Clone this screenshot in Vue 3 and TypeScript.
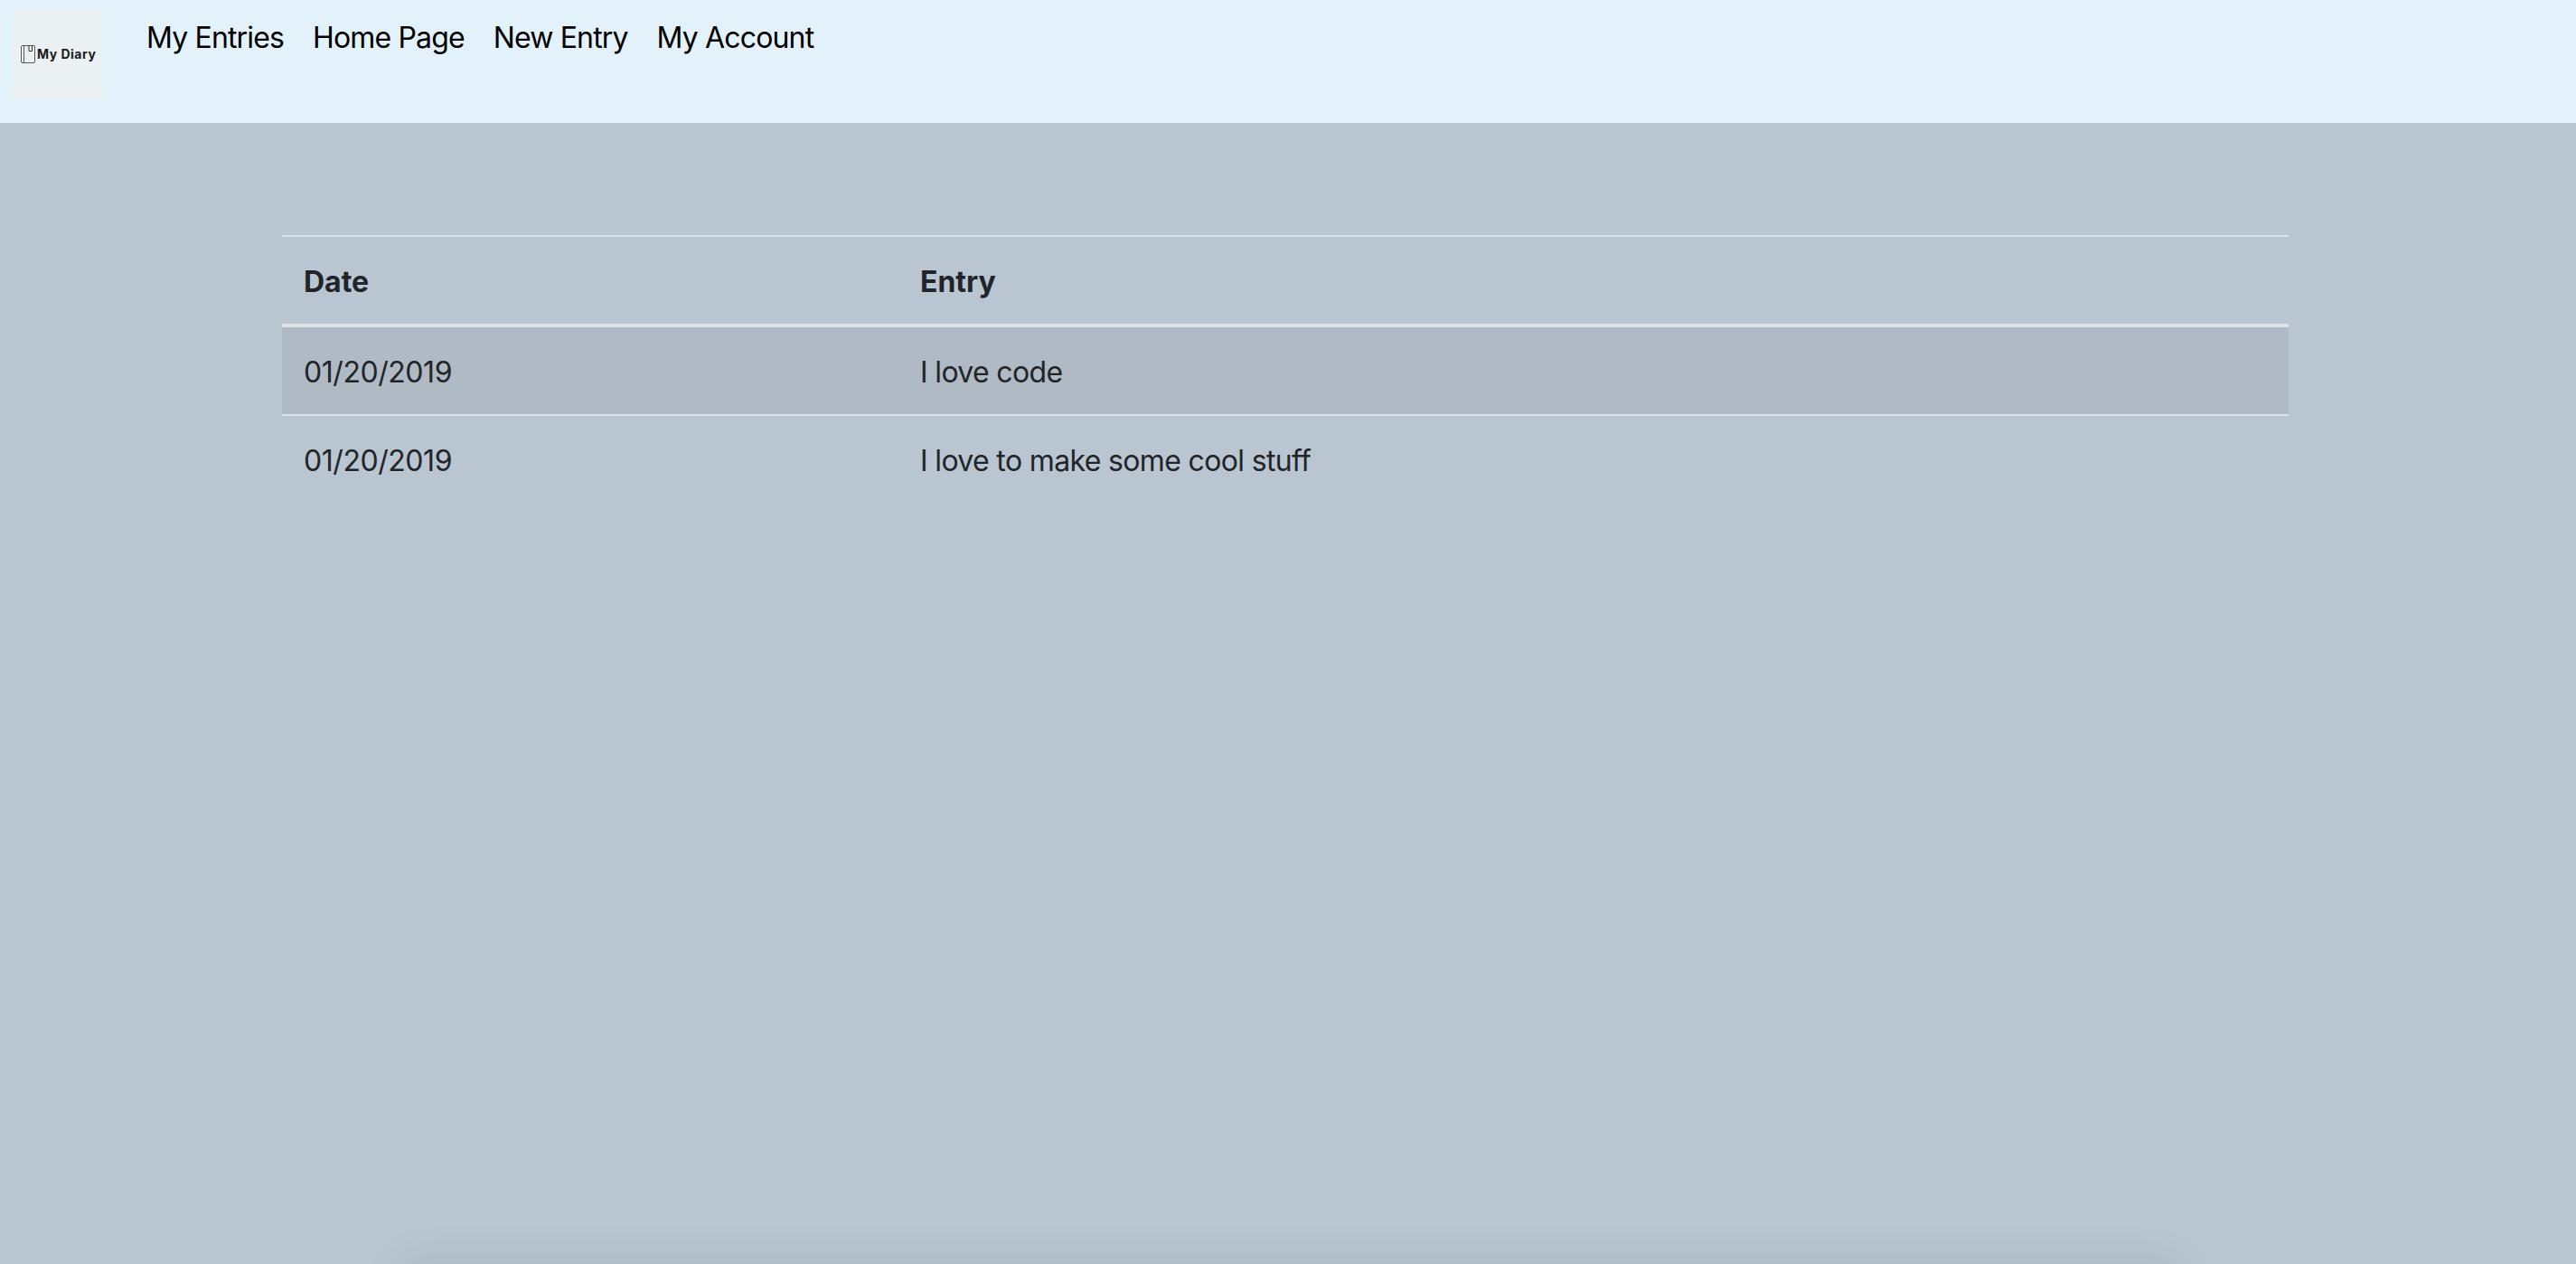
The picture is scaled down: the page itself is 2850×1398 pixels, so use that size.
<script setup lang="ts">
interface Entry { date: string; text: string }
const links: string[] = ['My Entries', 'Home Page', 'New Entry', 'My Account']
const entries: Entry[] = [
  { date: '01/20/2019', text: 'I love code' },
  { date: '01/20/2019', text: 'I love to make some cool stuff' },
]
</script>

<template>
  <div class="page">
    <header class="topbar">
      <a class="logo" href="#">
        <svg class="logo-icon" width="16" height="20" viewBox="0 0 16 20" fill="none" stroke="#55595c" stroke-width="1">
          <rect x="0.5" y="0.5" width="15" height="19" rx="1.5" />
          <path d="M3.5 0.5V19.5" />
          <path d="M9 0.5V6.5H12.5V0.5" stroke="#333" />
        </svg>
        <span class="logo-text">My Diary</span>
      </a>
      <nav class="nav">
        <a v-for="link in links" :key="link" class="nav-link" href="#">{{ link }}</a>
      </nav>
    </header>
    <main class="content">
      <table class="table">
        <thead>
          <tr><th class="col-date">Date</th><th>Entry</th></tr>
        </thead>
        <tbody>
          <tr v-for="(entry, i) in entries" :key="i" :class="{ striped: i % 2 === 0 }">
            <td class="date-cell">{{ entry.date }}</td>
            <td class="text-cell">{{ entry.text }}</td>
          </tr>
        </tbody>
      </table>
    </main>
    <div class="bottom-shadow"></div>
  </div>
</template>

<style>
html, body { margin: 0; background: #b9c5d1; }
</style>

<style scoped>
.page {
  position: relative;
  height: 1398px;
  overflow: hidden;
  background: #b9c5d1;
  font-family: Inter, "Liberation Sans", sans-serif;
  font-size: 32px;
  line-height: 48px;
  color: #212529;
}
.topbar {
  height: 136px;
  box-sizing: border-box;
  background: #e3f1fb;
  display: flex;
  align-items: flex-start;
  padding: 10px 0 0 14px;
}
.logo {
  width: 100px;
  height: 100px;
  background: #ebf0f2;
  display: flex;
  align-items: center;
  gap: 2px;
  padding-left: 9px;
  box-sizing: border-box;
  text-decoration: none;
}
.logo-icon { flex: none; }
.logo-text {
  font-family: Inter, sans-serif;
  font-weight: 700;
  font-size: 14px;
  letter-spacing: 0.5px;
  line-height: 20px;
  color: #1a1a1a;
  white-space: nowrap;
}
.nav {
  display: flex;
  gap: 32px;
  margin-left: 48px;
  margin-top: 8px;
}
.nav-link {
  color: #000;
  text-decoration: none;
  letter-spacing: -0.85px;
}
.content {
  padding: 124px 318px 0 312px;
}
.table {
  width: 2220px;
  border-collapse: collapse;
  table-layout: fixed;
}
th, td {
  padding: 26px 24px 22px;
  text-align: left;
  vertical-align: top;
  border-top: 2px solid #dee2e6;
}
th { border-bottom: 4px solid #dee2e6; font-weight: 700; }
.date-cell { letter-spacing: -0.45px; }
.text-cell { letter-spacing: -0.65px; }
.col-date { width: 634px; }
.striped { background: #b0bac4; }
.bottom-shadow {
  position: absolute;
  left: 445px;
  right: 440px;
  top: 1398px;
  height: 60px;
  box-shadow: 0 0 50px rgba(0, 0, 0, 0.09);
}
</style>
